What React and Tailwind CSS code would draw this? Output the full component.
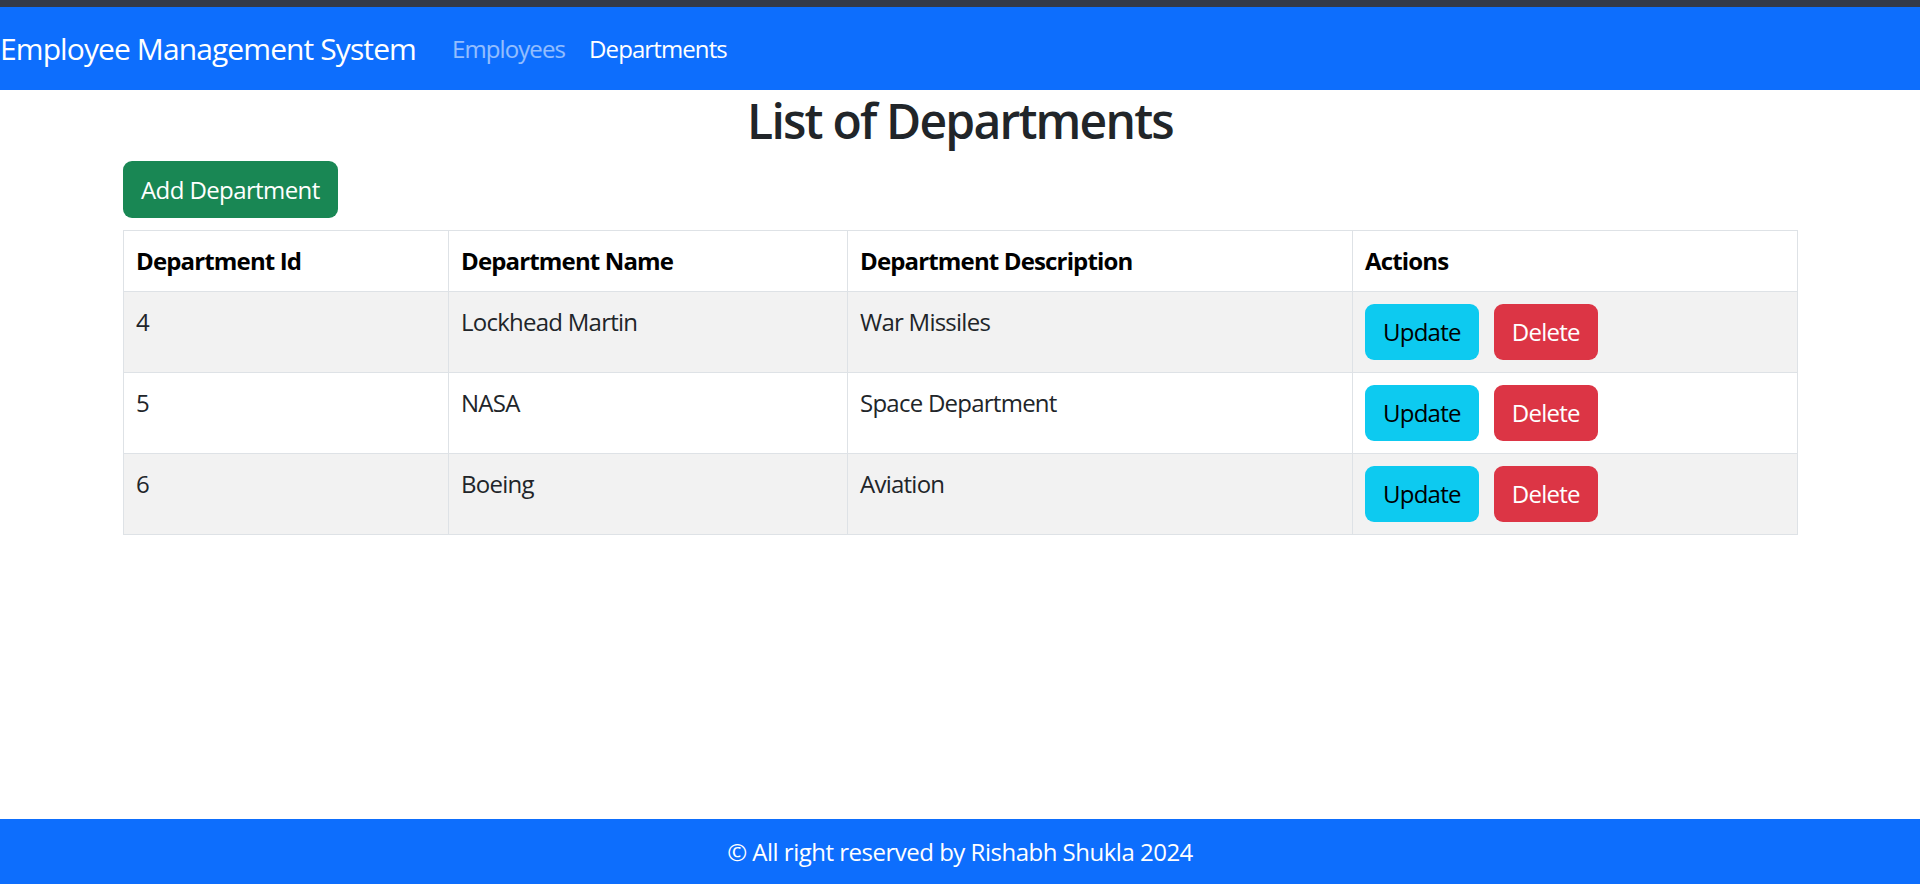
import React from "react";

const departments = [
  { id: 4, name: "Lockhead Martin", description: "War Missiles" },
  { id: 5, name: "NASA", description: "Space Department" },
  { id: 6, name: "Boeing", description: "Aviation" },
];

const App = () => {
  return (
    <div className="min-h-screen flex flex-col bg-white text-[#212529] font-['Open_Sans','Noto_Sans',sans-serif]">
      <div className="h-[7px] bg-[#343a48]" />
      <nav className="h-[83px] bg-[#0d6efd] flex items-center">
        <span className="text-[30px] leading-[45px] text-white mr-[24px] tracking-[-0.9px]">
          Employee Management System
        </span>
        <a className="px-[12px] text-[24px] leading-[36px] text-white/55 tracking-[-0.9px]">Employees</a>
        <a className="px-[12px] text-[24px] leading-[36px] text-white tracking-[-0.9px]">Departments</a>
      </nav>

      <main className="w-[1674px] mx-auto">
        <h2 className="text-center text-[48px] leading-[58px] pt-[2px] font-semibold mb-[11px] tracking-[-1.8px]">
          List of Departments
        </h2>
        <button className="h-[57px] px-[18px] rounded-[9px] bg-[#198754] text-white text-[24px] leading-[36px] mb-[12px] tracking-[-0.6px]">
          Add Department
        </button>
        <table className="w-[1674px] table-fixed border-collapse border border-[#dee2e6] text-[24px] leading-[36px] tracking-[-0.75px]">
          <colgroup>
            <col className="w-[325px]" />
            <col className="w-[399px]" />
            <col className="w-[505px]" />
            <col className="w-[445px]" />
          </colgroup>
          <thead>
            <tr className="text-left text-black">
              <th className="border border-[#dee2e6] p-[12px] font-bold align-bottom tracking-[-0.85px]">Department Id</th>
              <th className="border border-[#dee2e6] p-[12px] font-bold align-bottom tracking-[-0.85px]">Department Name</th>
              <th className="border border-[#dee2e6] p-[12px] font-bold align-bottom tracking-[-0.85px]">Department Description</th>
              <th className="border border-[#dee2e6] p-[12px] font-bold align-bottom tracking-[-0.85px]">Actions</th>
            </tr>
          </thead>
          <tbody>
            {departments.map((d, i) => (
              <tr key={d.id} className={i % 2 === 0 ? "bg-[#f2f2f2]" : "bg-white"}>
                <td className="border border-[#dee2e6] p-[12px] align-top">{d.id}</td>
                <td className="border border-[#dee2e6] p-[12px] align-top">{d.name}</td>
                <td className="border border-[#dee2e6] p-[12px] align-top">{d.description}</td>
                <td className="border border-[#dee2e6] p-[12px] align-top">
                  <div className="flex gap-[15px]">
                    <button className="h-[56px] px-[18px] rounded-[9px] bg-[#0dcaf0] text-black">Update</button>
                    <button className="h-[56px] px-[18px] rounded-[9px] bg-[#dc3545] text-white">Delete</button>
                  </div>
                </td>
              </tr>
            ))}
          </tbody>
        </table>
      </main>

      <footer className="mt-auto h-[65px] bg-[#0d6efd] flex items-center justify-center text-white text-[24px] tracking-[-0.5px]">
        © All right reserved by Rishabh Shukla 2024
      </footer>
    </div>
  );
};

export default App;
